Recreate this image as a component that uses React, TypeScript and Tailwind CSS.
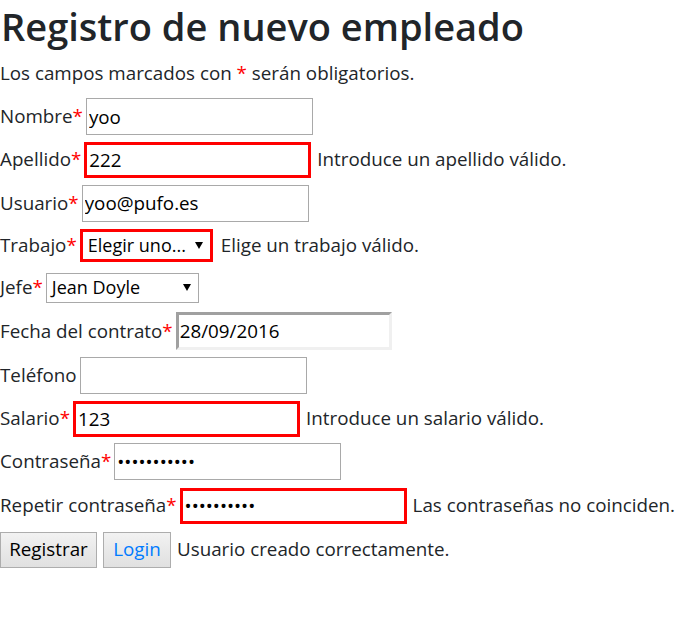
import React from 'react';

const FONT = "font-['Open_Sans',_'Noto_Sans',_sans-serif]";

function Req() {
  return <span className="text-[#ff0000]">*</span>;
}

function Field({
  label,
  required = true,
  width,
  value,
  type = 'text',
  error,
  invalid,
  rowH,
}: {
  label: string;
  required?: boolean;
  width: string;
  value: string;
  type?: string;
  error?: string;
  invalid?: boolean;
  rowH: string;
}) {
  return (
    <div className={`flex items-center gap-[3px] ${rowH}`}>
      <span>
        {label}
        {required && <Req />}
      </span>
      <input
        readOnly
        type={type}
        value={value}
        className={[
          width,
          'px-[2px] text-black outline-none bg-white',
          invalid ? 'h-[36px] border-[3px] border-[#ff0000]' : 'h-[37px] border border-[#a9a9a9]',
        ].join(' ')}
      />
      {error && <span className="ml-[3px]">{error}</span>}
    </div>
  );
}

function Select({ width, h, value, invalid }: { width: string; h: string; value: string; invalid?: boolean }) {
  return (
    <div
      className={[
        'flex items-center justify-between bg-white pl-[5px] pr-[7px] text-black',
        width,
        h,
        invalid ? 'border-[3px] border-[#ff0000]' : 'border border-[#a9a9a9]',
      ].join(' ')}
    >
      <span className="whitespace-nowrap text-[18px]">{value}</span>
      <svg width="8" height="7" viewBox="0 0 8 7" aria-hidden="true" className="shrink-0">
        <path d="M0 0h8L4 7z" fill="#000" />
      </svg>
    </div>
  );
}

export default function App() {
  return (
    <main className={`${FONT} min-h-[619px] w-[685px] bg-white text-[18.8px] text-[#212529]`}>
      <h1 className="h-[52px] pl-[1px] text-[38px] font-semibold leading-[52px]">Registro de nuevo empleado</h1>
      <p className="h-[43px] leading-[43px]">
        Los campos marcados con <Req /> serán obligatorios.
      </p>

      <Field rowH="h-[43px]" label="Nombre" width="w-[227px]" value="yoo" />
      <Field
        rowH="h-[43px]"
        label="Apellido"
        width="w-[227px]"
        value="222"
        invalid
        error="Introduce un apellido válido."
      />
      <Field rowH="h-[44px]" label="Usuario" width="w-[227px]" value="yoo@pufo.es" />

      <div className="flex h-[41px] items-center gap-[3px]">
        <span>
          Trabajo
          <Req />
        </span>
        <Select width="w-[133px]" h="h-[33px]" value="Elegir uno..." invalid />
        <span className="ml-[5px]">Elige un trabajo válido.</span>
      </div>

      <div className="flex h-[43px] items-center gap-[3px]">
        <span>
          Jefe
          <Req />
        </span>
        <Select width="w-[153px]" h="h-[30px]" value="Jean Doyle" />
      </div>

      <div className="flex h-[44px] items-center gap-[3px]">
        <span>
          Fecha del contrato
          <Req />
        </span>
        <input
          readOnly
          value="28/09/2016"
          className="h-[38px] w-[216px] border-[3px] border-t-[#a0a0a0] border-l-[#a0a0a0] border-b-[#f0f0f0] border-r-[#f0f0f0] bg-white px-[1px] text-black outline-none"
        />
      </div>

      <Field rowH="h-[44px]" label="Teléfono" required={false} width="w-[227px]" value="" />
      <Field
        rowH="h-[43px]"
        label="Salario"
        width="w-[227px]"
        value="123"
        invalid
        error="Introduce un salario válido."
      />
      <Field rowH="h-[43px]" label="Contraseña" width="w-[227px]" value="abcdefghijk" type="password" />
      <Field
        rowH="h-[45px]"
        label="Repetir contraseña"
        width="w-[227px]"
        value="abcdefghij"
        type="password"
        invalid
        error="Las contraseñas no coinciden."
      />

      <div className="flex h-[43px] items-center gap-[6px]">
        <button
          type="button"
          className="h-[36px] w-[97px] border border-[#adadad] bg-gradient-to-b from-[#f2f2f2] to-[#e0e0e0] text-black"
        >
          Registrar
        </button>
        <button
          type="button"
          className="h-[36px] w-[68px] border border-[#adadad] bg-gradient-to-b from-[#f2f2f2] to-[#e0e0e0] text-[#007bff]"
        >
          Login
        </button>
        <span>Usuario creado correctamente.</span>
      </div>
    </main>
  );
}
